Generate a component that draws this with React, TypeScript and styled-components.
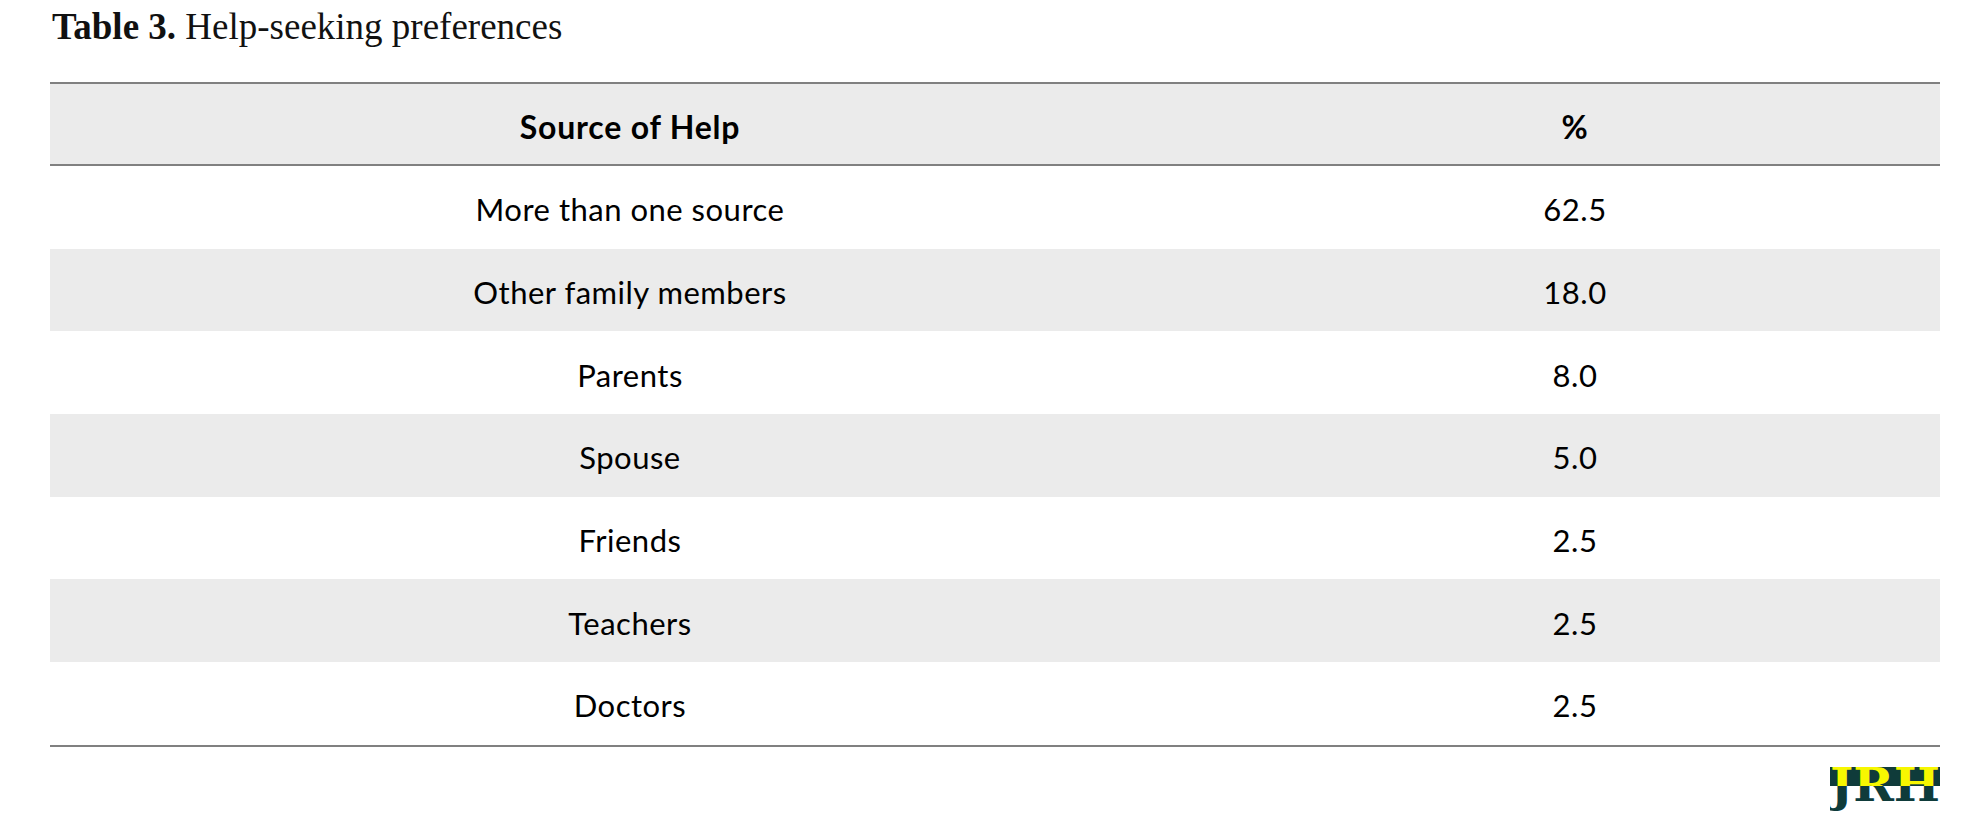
import React from 'react';
import styled, { createGlobalStyle } from 'styled-components';

const GlobalStyle = createGlobalStyle`
  body {
    margin: 0;
    background: #ffffff;
  }
`;

const Page = styled.div`
  width: 1890px;
  padding-left: 50px;
  display: flex;
  flex-direction: column;
`;

const Caption = styled.div`
  box-sizing: border-box;
  height: 82px;
  padding-top: 8px;
  padding-left: 2px;
  font-family: 'Liberation Serif', 'Times New Roman', serif;
  font-size: 37px;
  line-height: 37px;
  color: #111;

  b {
    font-weight: 700;
  }
`;

const Table = styled.div`
  display: flex;
  flex-direction: column;
  border-top: 2px solid #808080;
  border-bottom: 2px solid #808080;
  font-family: Lato, 'Noto Sans', sans-serif;
  color: #000;
`;

const Row = styled.div<{ $shaded?: boolean; $head?: boolean }>`
  box-sizing: border-box;
  display: grid;
  grid-template-columns: 1160px 730px;
  align-items: center;
  height: ${(p) => (p.$head ? '82px' : '82.7px')};
  background: ${(p) => (p.$shaded ? '#ebebeb' : '#ffffff')};
  font-size: ${(p) => (p.$head ? '32px' : '31px')};
  letter-spacing: ${(p) => (p.$head ? '0.8px' : '0.5px')};
  font-weight: ${(p) => (p.$head ? 700 : 400)};
  border-bottom: ${(p) => (p.$head ? '2px solid #808080' : 'none')};
`;

const Cell = styled.div`
  text-align: center;
  padding-top: 4px;
`;

const Footer = styled.div`
  display: flex;
  justify-content: flex-end;
  padding-top: 6px;
`;

const rows: [string, string][] = [
  ['More than one source', '62.5'],
  ['Other family members', '18.0'],
  ['Parents', '8.0'],
  ['Spouse', '5.0'],
  ['Friends', '2.5'],
  ['Teachers', '2.5'],
  ['Doctors', '2.5'],
];

// journal mark: upper half of the letters yellow on a dark band
const Logo = () => (
  <svg width="110" height="62" viewBox="0 -12 110 62">
    <defs>
      <linearGradient id="jrh-fill" x1="0" y1="0" x2="0" y2="38" gradientUnits="userSpaceOnUse">
        <stop offset="0.55" stopColor="#f7f700" />
        <stop offset="0.55" stopColor="#0f3b3a" />
      </linearGradient>
    </defs>
    <rect x="0" y="2" width="110" height="19" fill="#0f3b3a" />
    <text
      x="0"
      y="36"
      fontFamily="'DejaVu Serif', serif"
      fontWeight="700"
      fontSize="46"
      textLength="110"
      lengthAdjust="spacingAndGlyphs"
      fill="url(#jrh-fill)"
    >
      JRH
    </text>
  </svg>
);

const App = () => {
  return (
    <Page>
      <GlobalStyle />
      <Caption>
        <b>Table 3.</b> Help-seeking preferences
      </Caption>
      <Table>
        <Row $shaded $head>
          <Cell>Source of Help</Cell>
          <Cell>%</Cell>
        </Row>
        {rows.map(([source, pct], index) => (
          <Row key={source} $shaded={index % 2 === 1}>
            <Cell>{source}</Cell>
            <Cell>{pct}</Cell>
          </Row>
        ))}
      </Table>
      <Footer>
        <Logo />
      </Footer>
    </Page>
  );
};

export default App;
